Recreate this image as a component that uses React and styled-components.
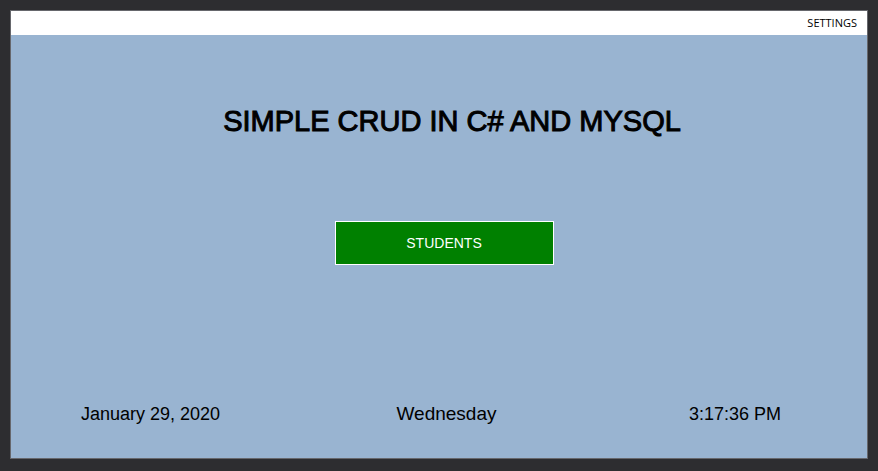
import React from "react";
import styled, { createGlobalStyle } from "styled-components";

const GlobalStyle = createGlobalStyle`
  * { box-sizing: border-box; }
  body { margin: 0; background: #2d2d30; }
`;

const Desktop = styled.div`
  display: flex;
  min-height: 100vh;
  padding: 10px 10px 12px;
  background: #2d2d30;
`;

const AppWindow = styled.main`
  flex: 1;
  display: flex;
  flex-direction: column;
  border: 1px solid #66676c;
  background: #99b4d1;
  color: #000;
  font-family: "Liberation Sans", Arial, sans-serif;
`;

const MenuBar = styled.nav`
  display: flex;
  justify-content: flex-end;
  height: 24px;
  padding: 0 6px;
  background: #fff;
`;

const MenuButton = styled.button`
  padding: 0 4px 2px;
  border: 0;
  background: transparent;
  color: #000;
  font: 11px "Open Sans", "Segoe UI", sans-serif;
`;

const Content = styled.div`
  flex: 1;
  display: flex;
  flex-direction: column;
  align-items: center;
  padding: 68px 70px 32px;
`;

const Title = styled.h1`
  margin: 0;
  padding-left: 26px;
  font-size: 29px;
  line-height: 36px;
  font-weight: 400;
  -webkit-text-stroke: 1px #000;
  white-space: nowrap;
`;

const StudentsButton = styled.button`
  width: 219px;
  height: 44px;
  margin-top: 82px;
  margin-left: 10px;
  border: 1px solid #fff;
  background: #008000;
  color: #fff;
  font: 14px "Liberation Sans", Arial, sans-serif;
`;

const StatusRow = styled.footer`
  display: flex;
  justify-content: space-between;
  align-self: stretch;
  margin-top: auto;
  padding-right: 16px;
  line-height: 24px;
`;

const Status = styled.time`
  font-size: 18px;
`;

const Weekday = styled.span`
  margin-right: 16px;
  font-size: 19px;
`;

export default function App() {
  return (
    <>
      <GlobalStyle />
      <Desktop>
        <AppWindow>
          <MenuBar>
            <MenuButton type="button">SETTINGS</MenuButton>
          </MenuBar>
          <Content>
            <Title>SIMPLE CRUD IN C# AND MYSQL</Title>
            <StudentsButton type="button">STUDENTS</StudentsButton>
            <StatusRow>
              <Status>January 29, 2020</Status>
              <Weekday>Wednesday</Weekday>
              <Status>3:17:36 PM</Status>
            </StatusRow>
          </Content>
        </AppWindow>
      </Desktop>
    </>
  );
}
